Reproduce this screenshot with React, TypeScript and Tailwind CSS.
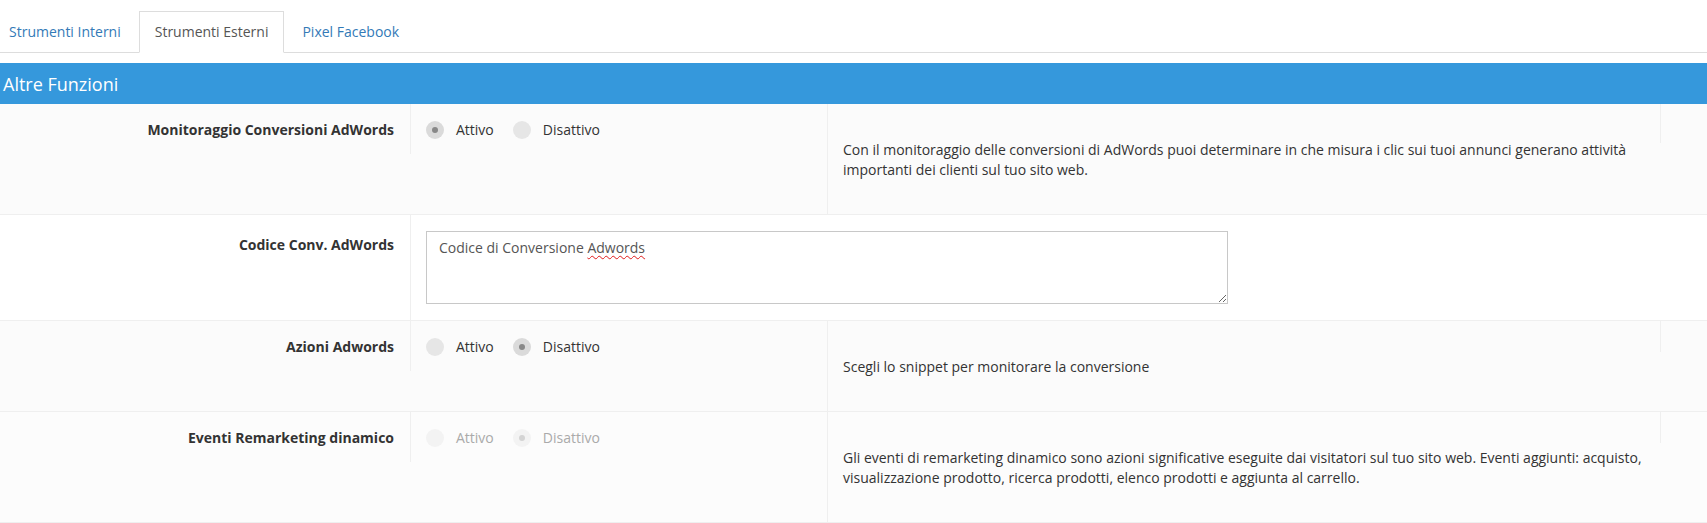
import { useState } from "react";

type Choice = "on" | "off";

interface ToggleRow {
  label: string;
  value: Choice;
  disabled?: boolean;
  help: string;
  bg: string;
  edge: string;
}

const rows: ToggleRow[] = [
  {
    label: "Monitoraggio Conversioni AdWords",
    value: "on",
    help: "Con il monitoraggio delle conversioni di AdWords puoi determinare in che misura i clic sui tuoi annunci generano attività importanti dei clienti sul tuo sito web.",
    bg: "bg-[#fbfbfb]",
    edge: "h-[39px]",
  },
  {
    label: "Azioni Adwords",
    value: "off",
    help: "Scegli lo snippet per monitorare la conversione",
    bg: "bg-[#fbfbfb]",
    edge: "h-[31px]",
  },
  {
    label: "Eventi Remarketing dinamico",
    value: "off",
    disabled: true,
    help: "Gli eventi di remarketing dinamico sono azioni significative eseguite dai visitatori sul tuo sito web. Eventi aggiunti: acquisto, visualizzazione prodotto, ricerca prodotti, elenco prodotti e aggiunta al carrello.",
    bg: "bg-[#fcfcfc]",
    edge: "h-[31px]",
  },
];

function Radio({ checked, disabled }: { checked: boolean; disabled?: boolean }) {
  const ring = disabled ? "bg-[#f3f3f3]" : checked ? "bg-[#dadada]" : "bg-[#e6e6e6]";
  return (
    <span className={`w-[18px] h-[18px] rounded-full flex items-center justify-center ${ring}`}>
      {checked && (
        <span className={`w-[6px] h-[6px] rounded-full ${disabled ? "bg-[#d4d4d4]" : "bg-[#888888]"}`} />
      )}
    </span>
  );
}

function RadioRow({ row }: { row: ToggleRow }) {
  const [value, setValue] = useState<Choice>(row.value);
  const text = row.disabled ? "text-[#aaaaaa]" : "text-[#333333]";

  const option = (v: Choice, label: string) => (
    <button
      type="button"
      disabled={row.disabled}
      onClick={() => setValue(v)}
      className="flex items-center gap-3 mr-[19px]"
    >
      <Radio checked={value === v} disabled={row.disabled} />
      <span className={text}>{label}</span>
    </button>
  );

  return (
    <div className={`flex border-b border-[#efefef] ${row.bg}`}>
      <div className="w-[411px] shrink-0 h-[50px] border-r border-[#efefef] pr-4 pt-4 text-right font-bold text-[#333333]">
        {row.label}
      </div>
      <div className="w-[416px] shrink-0 h-[50px] pl-[15px] pt-4 flex items-start">
        {option("on", "Attivo")}
        {option("off", "Disattivo")}
      </div>
      <div className="flex-1 border-l border-[#efefef]">
        <div className="h-9 flex justify-end items-start">
          <div className={`w-[47px] border-l border-[#efefef] ${row.edge}`} />
        </div>
        <p className="pl-[15px] pr-[30px] pb-[34px] text-[#333333]">{row.help}</p>
      </div>
    </div>
  );
}

export default function App() {
  const [tab, setTab] = useState(1);
  const tabs = ["Strumenti Interni", "Strumenti Esterni", "Pixel Facebook"];

  return (
    <div className="min-h-screen bg-white text-[14px] leading-5 font-['Open_Sans',sans-serif]">
      <div className="pt-[11px] border-b border-[#dddddd]">
        <div className="flex -ml-[7px]">
          {tabs.map((t, i) => (
            <button
              key={t}
              type="button"
              onClick={() => setTab(i)}
              className={`-mb-px mr-[2px] px-[15px] py-[10px] border ${
                tab === i
                  ? "bg-white border-[#dddddd] border-b-white text-[#555555]"
                  : "border-transparent text-[#337ab7]"
              }`}
            >
              {t}
            </button>
          ))}
        </div>
      </div>

      <div className="mt-[10px] h-[41px] bg-[#3598dc] px-[3px] flex items-center text-white text-[18px]">
        Altre Funzioni
      </div>

      <RadioRow row={rows[0]} />

      <div className="flex border-b border-[#efefef] bg-white">
        <div className="w-[411px] shrink-0 border-r border-[#efefef] pr-4 pt-5 text-right font-bold text-[#333333]">
          Codice Conv. AdWords
        </div>
        <div className="pl-[15px] py-4">
          <div className="relative">
            <textarea
              spellCheck
              defaultValue="Codice di Conversione Adwords"
              className="block w-[802px] h-[73px] border border-[#c8c8c8] px-3 py-[6px] text-[#555555] outline-none"
            />
            <div className="absolute left-[13px] top-[7px] text-transparent pointer-events-none">
              Codice di Conversione{" "}
              <span className="underline decoration-wavy decoration-[#e01b1b] decoration-1 underline-offset-2">
                Adwords
              </span>
            </div>
          </div>
        </div>
      </div>

      <RadioRow row={rows[1]} />
      <RadioRow row={rows[2]} />
    </div>
  );
}
